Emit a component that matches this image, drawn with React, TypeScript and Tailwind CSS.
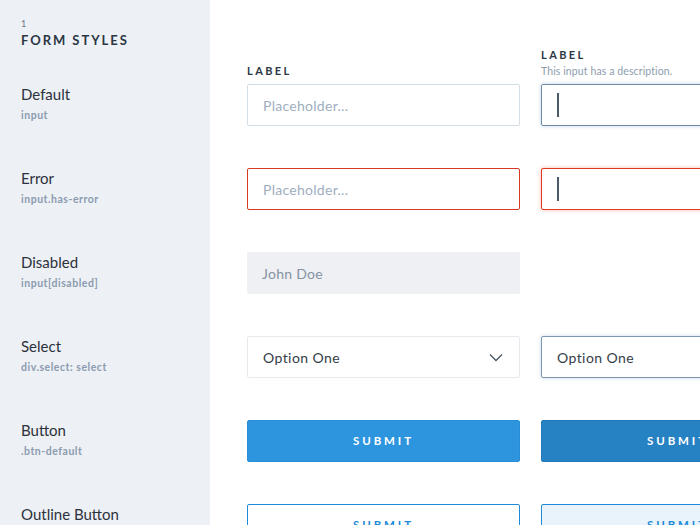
const font = { fontFamily: "Lato, 'Open Sans', sans-serif" };

const rows = [
  { name: "Default", tag: "input" },
  { name: "Error", tag: "input.has-error" },
  { name: "Disabled", tag: "input[disabled]" },
  { name: "Select", tag: "div.select: select" },
  { name: "Button", tag: ".btn-default" },
  { name: "Outline Button", tag: ".btn-outline" },
];

function Chevron() {
  return (
    <svg width="14" height="9" viewBox="0 0 14 9" fill="none" className="text-[#4a5562]">
      <path d="M1 1.5l6 6 6-6" stroke="currentColor" strokeWidth="1.3" />
    </svg>
  );
}

function Caret() {
  return <span className="ml-[15px] block h-[24px] w-[2px] bg-[#4d5a6a]" />;
}

export default function App() {
  return (
    <div className="flex h-[525px] w-[700px] overflow-hidden bg-white" style={font}>
      <aside className="w-[210px] shrink-0 bg-[#edf0f5] px-[21px]">
        <div className="flex h-[84px] flex-col pt-[19px]">
          <span className="text-[9px] leading-[10px] text-[#6b7a8c]">1</span>
          <span className="mt-[3px] text-[13px] font-bold leading-[16px] tracking-[0.15em] text-[#2c3744]">
            FORM STYLES
          </span>
        </div>
        {rows.map((r) => (
          <div key={r.name} className="flex h-[84px] flex-col">
            <span className="text-[15px] leading-[20px] text-[#2b323b]">{r.name}</span>
            <span className="mt-[4px] text-[10.5px] font-bold leading-[14px] tracking-[0.05em] text-[#8b9bb0]">
              {r.tag}
            </span>
          </div>
        ))}
      </aside>

      <main className="grid shrink-0 grid-cols-[273px_273px] gap-x-[21px] pl-[37px]">
        {/* labels */}
        <div className="flex h-[84px] flex-col justify-end pb-[6px]">
          <span className="text-[11px] font-bold leading-[14px] tracking-[0.22em] text-[#2c3744]">LABEL</span>
        </div>
        <div className="flex h-[84px] flex-col justify-end pb-[6px]">
          <span className="text-[11px] font-bold leading-[14px] tracking-[0.22em] text-[#2c3744]">LABEL</span>
          <span className="mt-[2px] text-[10.5px] leading-[14px] tracking-[0.01em] text-[#8e9cad]">This input has a description.</span>
        </div>

        {/* default */}
        <div className="h-[84px]">
          <div className="flex h-[42px] items-center rounded-[2px] border border-[#d3dde6] bg-white px-[15px] text-[14px] tracking-[0.02em] text-[#9eaebf]">
            Placeholder...
          </div>
        </div>
        <div className="h-[84px]">
          <div className="flex h-[42px] items-center rounded-[2px] border border-[#6f8cab] bg-white shadow-[0_0_4px_rgba(90,130,180,0.35)]">
            <Caret />
          </div>
        </div>

        {/* error */}
        <div className="h-[84px]">
          <div className="flex h-[42px] items-center rounded-[2px] border border-[#d63a22] bg-white px-[15px] text-[14px] tracking-[0.02em] text-[#9eaebf]">
            Placeholder...
          </div>
        </div>
        <div className="h-[84px]">
          <div className="flex h-[42px] items-center rounded-[2px] border border-[#e0381e] bg-white shadow-[0_0_4px_rgba(230,60,30,0.35)]">
            <Caret />
          </div>
        </div>

        {/* disabled */}
        <div className="h-[84px]">
          <div className="flex h-[42px] items-center rounded-[2px] bg-[#eff0f3] px-[15px] text-[14px] tracking-[0.02em] text-[#8493a5]">
            John Doe
          </div>
        </div>
        <div className="h-[84px]" />

        {/* select */}
        <div className="h-[84px]">
          <div className="flex h-[42px] items-center justify-between rounded-[2px] border border-[#e6e9ee] bg-white pl-[15px] pr-[16px] text-[14px] tracking-[0.03em] text-[#343d48]">
            <span>Option One</span>
            <Chevron />
          </div>
        </div>
        <div className="h-[84px]">
          <div className="flex h-[42px] items-center rounded-[2px] border border-[#7c97b6] bg-white pl-[15px] text-[14px] tracking-[0.03em] text-[#343d48] shadow-[0_0_4px_rgba(90,130,180,0.3)]">
            Option One
          </div>
        </div>

        {/* button */}
        <div className="h-[84px]">
          <button className="flex h-[42px] w-full items-center justify-center rounded-[2px] border border-[#2a8ed6] bg-[#2d95de] text-[11.5px] font-bold tracking-[0.25em] text-white">
            SUBMIT
          </button>
        </div>
        <div className="h-[84px]">
          <button className="flex h-[42px] w-full items-center justify-center rounded-[2px] border border-[#2178b8] bg-[#2782c4] text-[11.5px] font-bold tracking-[0.25em] text-white">
            SUBMIT
          </button>
        </div>

        {/* outline button */}
        <div className="h-[84px]">
          <button className="flex h-[42px] w-full items-center justify-center rounded-[2px] border border-[#1e8ad9] bg-white text-[11.5px] font-bold tracking-[0.25em] text-[#1e8ad9]">
            SUBMIT
          </button>
        </div>
        <div className="h-[84px]">
          <button className="flex h-[42px] w-full items-center justify-center rounded-[2px] border border-[#1e8ad9] bg-[#e8f3fc] text-[11.5px] font-bold tracking-[0.25em] text-[#1e8ad9]">
            SUBMIT
          </button>
        </div>
      </main>
    </div>
  );
}
